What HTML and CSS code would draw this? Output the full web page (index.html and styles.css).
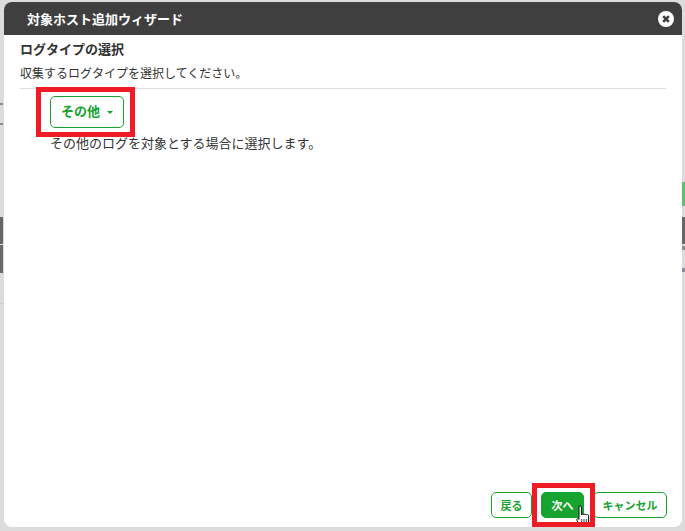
FILE: index.html
```html
<!DOCTYPE html>
<html lang="ja">
<head>
<meta charset="utf-8">
<title>対象ホスト追加ウィザード</title>
<link rel="stylesheet" href="styles.css">
</head>
<body>
<div class="back-strip back-left"></div>
<div class="back-strip back-left-low"></div>
<div class="back-strip back-right"></div>
<div class="back-strip back-tick back-right-a"></div>
<div class="back-strip back-tick back-right-b"></div>
<div class="back-strip back-tick back-left-a"></div>
<div class="back-strip back-tick back-left-b"></div>
<div class="back-green"></div>
<div class="back-line"></div>
<div class="dialog">
  <header class="title-bar">
    <h1 class="title">対象ホスト追加ウィザード</h1>
    <svg class="close" width="16" height="16" viewBox="0 0 16 16" aria-label="閉じる">
      <circle cx="8" cy="8" r="8" fill="#fff"/>
      <path d="M5.2 5.2l5.6 5.6M10.8 5.2l-5.600 5.600" stroke="#3f3f3f" stroke-width="2.6" fill="none"/>
    </svg>
  </header>
  <main class="content">
    <h2 class="heading">ログタイプの選択</h2>
    <p class="desc">収集するログタイプを選択してください。</p>
    <div class="rule"></div>
    <div class="type-area">
      <button class="btn btn-type">その他<span class="caret"></span></button>
      <p class="note">その他のログを対象とする場合に選択します。</p>
    </div>
  </main>
  <footer class="footer">
    <button class="btn btn-small btn-back">戻る</button>
    <button class="btn btn-small btn-primary">次へ</button>
    <button class="btn btn-small btn-cancel">キャンセル</button>
  </footer>
</div>
<svg class="cursor" width="16" height="25" viewBox="0 0 16 25">
  <path d="M3 2c0-1.500 2.400-1.500 2.400 0v8c.2-1.300 2.300-1.300 2.400 0 .2-1.200 2.300-1.200 2.400.2.300-1 2.400-1 2.400.5v5.300c0 2.500-.8 3.500-1.400 5.500H4.500C3.700 19.800 2.500 18.500.9 15.500c-.8-1.500.7-2.600 2.100-1z" fill="#fff" stroke="#111" stroke-width="1" stroke-linejoin="round"/>
  <path d="M5.700 14v4M8 14v4M10.300 14v4" stroke="#111" stroke-width=".8"/>
</svg>
<div class="mark mark-type"></div>
<div class="mark mark-next"></div>
</body>
</html>
```
FILE: styles.css
```css
* { box-sizing: border-box; }
html, body { height: 100%; }
body {
  margin: 0;
  padding: 2px 3px 4px 4px;
  background: #dcdcdc;
  font-family: "Noto Sans CJK JP", "Liberation Sans", sans-serif;
  color: #333;
  overflow: hidden;
  position: relative;
}
.back-strip { position: absolute; background: #666; width: 3px; }
.back-left { left: 0; top: 217px; height: 27px; }
.back-left-low { left: 0; top: 245px; height: 28px; background: #6a6a6a; }
.back-right { right: 0; top: 217px; height: 27px; }
.back-tick { height: 4px; background: #8a8a96; }
.back-right-a { right: 0; top: 246px; }
.back-right-b { right: 0; top: 268px; }
.back-left-a { left: 0; top: 103px; height: 2px; }
.back-left-b { left: 0; top: 123px; height: 2px; }
.back-green { position: absolute; right: 0; top: 182px; width: 3px; height: 24px; background: #5fbf6f; }
.back-line { position: absolute; left: 0; top: 303px; width: 3px; height: 1px; background: #c4c4e8; }
.dialog {
  position: relative;
  height: 100%;
  display: flex;
  flex-direction: column;
  background: #fff;
  border-radius: 8px;
  overflow: hidden;
}
.title-bar {
  flex: none;
  height: 33px;
  background: #3f3f3f;
  display: flex;
  align-items: center;
  justify-content: space-between;
  padding: 0 8px 0 23px;
}
.title { margin: 0; font-size: 13px; font-weight: 700; color: #fff; line-height: 1; }
.content { flex: 1; padding: 0 16px; }
.heading { margin: 5px 0 0; font-size: 13px; font-weight: 700; line-height: 18px; }
.desc { margin: 6px 0 0; font-size: 12px; line-height: 18px; }
.rule { margin-top: 6px; height: 1px; background: #ddd; }
.type-area { padding: 7px 0 0 30px; }
.btn {
  font-family: inherit;
  font-weight: 700;
  background: #fff;
  color: #17a32f;
  border: 1px solid #17a32f;
  border-radius: 5px;
  padding: 0;
  line-height: 1;
}
.btn-type { display: block; width: 74px; height: 32px; font-size: 13px; padding-bottom: 3px; }
.caret {
  display: inline-block;
  margin-left: 7px;
  vertical-align: middle;
  border-left: 3px solid transparent;
  border-right: 3px solid transparent;
  border-top: 3px solid #17a32f;
}
.note { margin: 6px 0 0; font-size: 13px; line-height: 18px; }
.footer { flex: none; display: flex; justify-content: flex-end; gap: 9px; padding: 0 15px 9px 0; }
.btn-small { height: 26px; font-size: 11px; }
.btn-back { width: 41px; }
.btn-primary { width: 43px; background: #17a32f; color: #fff; }
.btn-cancel { width: 74px; }
.mark { position: absolute; border: 5px solid #ee1c25; }
.mark-type { left: 36px; top: 87px; width: 99px; height: 50px; }
.mark-next { left: 532px; top: 483px; width: 63px; height: 44px; }
.cursor { position: absolute; left: 576px; top: 505px; }
```
